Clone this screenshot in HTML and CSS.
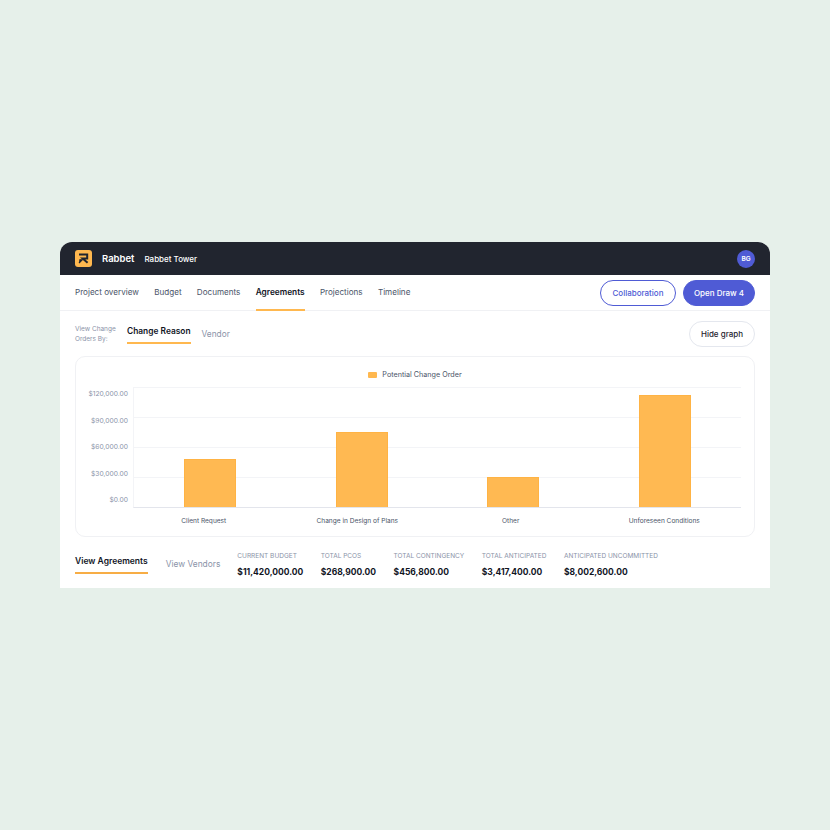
FILE: index.html
```html
<!DOCTYPE html>
<html lang="en">
<head>
<meta charset="utf-8">
<title>Rabbet Tower - Agreements</title>
<link rel="stylesheet" href="styles.css">
</head>
<body>
<main class="app">
  <header class="topbar">
    <svg class="logo" viewBox="0 0 17 17" aria-hidden="true">
      <rect width="17" height="17" rx="3" fill="#ffb84f"/>
      <path d="M4 4.6H12.2V8.4H7.6L12.6 12.8" fill="none" stroke="#21252f" stroke-width="2"/>
      <path d="M4 13L7.2 9.8H4.4" fill="#21252f" stroke="#21252f" stroke-width="1.2"/>
    </svg>
    <span class="brand">Rabbet</span>
    <span class="project">Rabbet Tower</span>
    <span class="avatar">BG</span>
  </header>

  <nav class="mainnav">
    <a href="#">Project overview</a>
    <a href="#">Budget</a>
    <a href="#">Documents</a>
    <a href="#" class="active">Agreements</a>
    <a href="#">Projections</a>
    <a href="#">Timeline</a>
    <div class="actions">
      <button class="btn btn-outline">Collaboration</button>
      <button class="btn btn-primary">Open Draw 4</button>
    </div>
  </nav>

  <section class="content">
    <div class="viewby">
      <p class="viewby-label">View Change<br>Orders By:</p>
      <a href="#" class="tab active">Change Reason</a>
      <a href="#" class="tab">Vendor</a>
      <button class="btn btn-plain">Hide graph</button>
    </div>

    <div class="card">
      <div class="legend"><i class="swatch"></i>Potential Change Order</div>
      <div class="chart">
        <div class="yaxis">
          <span>$120,000.00</span>
          <span>$90,000.00</span>
          <span>$60,000.00</span>
          <span>$30,000.00</span>
          <span>$0.00</span>
        </div>
        <div class="plot">
          <div class="col"><div class="bar" style="height:48px"></div></div>
          <div class="col"><div class="bar" style="height:75px"></div></div>
          <div class="col"><div class="bar" style="height:30px"></div></div>
          <div class="col"><div class="bar" style="height:112px"></div></div>
        </div>
      </div>
      <div class="xaxis">
        <span>Client Request</span>
        <span>Change in Design of Plans</span>
        <span>Other</span>
        <span>Unforeseen Conditions</span>
      </div>
    </div>

    <div class="summary">
      <a href="#" class="tab active">View Agreements</a>
      <a href="#" class="tab">View Vendors</a>
      <dl class="stat"><dt>CURRENT BUDGET</dt><dd>$11,420,000.00</dd></dl>
      <dl class="stat"><dt>TOTAL PCOS</dt><dd>$268,900.00</dd></dl>
      <dl class="stat"><dt>TOTAL CONTINGENCY</dt><dd>$456,800.00</dd></dl>
      <dl class="stat"><dt>TOTAL ANTICIPATED</dt><dd>$3,417,400.00</dd></dl>
      <dl class="stat"><dt>ANTICIPATED UNCOMMITTED</dt><dd>$8,002,600.00</dd></dl>
    </div>
  </section>
</main>
</body>
</html>
```

FILE: styles.css
```css
*{box-sizing:border-box}
body{margin:0;min-height:100vh;display:flex;align-items:center;justify-content:center;
     background:#e6f0ea;font-family:Inter,"Noto Sans",sans-serif;color:#1f2430}
a{text-decoration:none;color:inherit}
p,dl,dd{margin:0}

.app{width:710px;height:346px;background:#fff;border-radius:12px 12px 0 0;overflow:hidden}

/* top bar */
.topbar{height:33px;background:#21252f;color:#fff;display:flex;align-items:center;padding:0 15px}
.logo{width:17px;height:17px;margin-right:10px}
.brand{font-size:9.5px;font-weight:600;margin-right:10px}
.project{font-size:8px;font-weight:500}
.avatar{margin-left:auto;width:18px;height:18px;border-radius:50%;background:#4f5bd5;
        font-size:6.5px;font-weight:600;display:flex;align-items:center;justify-content:center}

/* main nav */
.mainnav{height:36px;border-bottom:1px solid #f0f1f4;display:flex;align-items:stretch;padding:0 15px;gap:15.3px}
.mainnav a{font-size:8.1px;color:#4a5468;display:flex;align-items:center;border-bottom:2px solid transparent;margin-bottom:-1px}
.mainnav a.active{font-size:8.3px;color:#11151f;font-weight:600;border-bottom-color:#ffb84f}
.actions{margin-left:auto;display:flex;align-items:center;gap:7px}

.btn{font-family:inherit;font-size:8px;font-weight:500;height:26px;border-radius:13px;padding:0;background:#fff;white-space:nowrap;cursor:pointer}
.btn-outline{width:76px;border:1px solid #4f5bd5;color:#4f5bd5}
.btn-primary{width:72px;border:1px solid #4f5bd5;background:#4f5bd5;color:#fff}
.btn-plain{width:66px;border:1px solid #e4e7ee;color:#1f2430;margin-left:auto}

.content{padding:10px 15px 0}

/* view by */
.viewby{display:flex;align-items:center;height:26px}
.viewby-label{font-size:6.5px;line-height:10px;color:#8a93a8;width:52px}
.tab{font-size:8.3px;color:#8a93a8}
.tab.active{font-size:8.4px;font-weight:600;color:#11151f;border-bottom:2px solid #ffb84f}
.viewby .tab.active{padding:0 0 6px;margin-right:11px;margin-top:1px}
.viewby .tab:not(.active){margin-top:-1px}

/* chart card */
.card{margin-top:9px;height:181px;border:1px solid #f0f1f4;border-radius:10px;padding-top:12px}
.legend{display:flex;align-items:center;justify-content:center;font-size:7.2px;color:#4a5468;height:11px}
.swatch{width:9px;height:6px;background:#ffb84f;border-radius:1px;margin-right:5px}
.chart{display:flex;margin-top:7px;height:121px;padding-right:13px}
.yaxis{width:52px;height:120px;display:flex;flex-direction:column;justify-content:space-between;
       align-items:flex-end;font-size:6.7px;line-height:14px;color:#8a93a8;flex:none}
.plot{flex:1;margin-left:5px;height:121px;display:flex;border-left:1px solid #f3f4f7;border-bottom:1px solid #e3e5ec;
      background:repeating-linear-gradient(to bottom,#f3f4f7 0,#f3f4f7 1px,transparent 1px,transparent 30px)}
.col{flex:1;display:flex;align-items:flex-end;justify-content:center}
.bar{width:52px;background:#ffb952;border:1px solid #ffb344;border-bottom:0}
.xaxis{display:grid;grid-template-columns:repeat(4,1fr);margin:7px 13px 0 51px;font-size:6.55px;line-height:12px;color:#4a5468;text-align:center}

/* summary strip */
.summary{display:flex;align-items:center;height:51px}
.summary .tab.active{font-size:8.5px;padding-bottom:6px;margin-right:18px;margin-top:5px;border-bottom-color:#f7ad45}
.summary .tab:not(.active){font-size:8.4px;margin-right:17px;margin-top:3px}
.stat{margin-right:17.5px;margin-top:3px}
.stat dt{font-size:6.5px;color:#8a93a8;line-height:10px}
.stat dd{font-size:8.5px;font-weight:700;color:#11151f;margin-top:5px;line-height:12px}
```
